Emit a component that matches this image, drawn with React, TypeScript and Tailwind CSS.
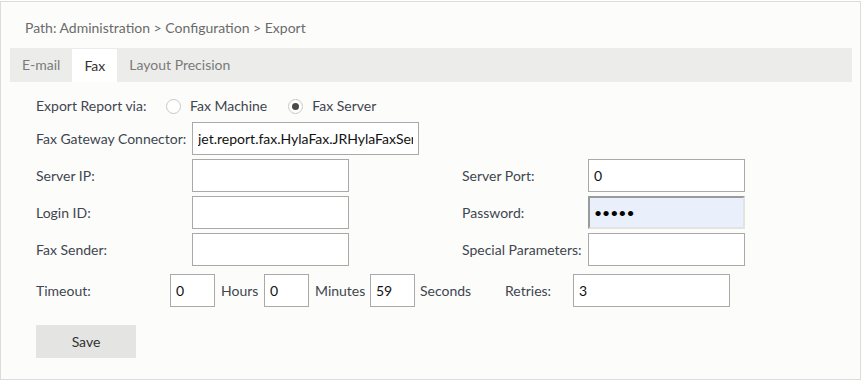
import type { ReactNode } from 'react';

const inputBase =
  'block h-[33px] border border-[#a9a9a9] bg-white px-[5px] text-[14px] text-[#111] outline-none';

function Field({ value = '', width = 'w-[157px]' }: { value?: string; width?: string }) {
  return <input readOnly value={value} className={`${inputBase} ${width}`} />;
}

function Row({ label, children }: { label: string; children: ReactNode }) {
  return (
    <div className="flex items-center">
      <span className="w-[156px] shrink-0">{label}</span>
      {children}
    </div>
  );
}

function Radio({ checked, label }: { checked?: boolean; label: string }) {
  return (
    <label className="flex items-center">
      <span className="flex h-[15px] w-[15px] items-center justify-center rounded-full border border-[#c8c8c8] bg-white">
        {checked && <span className="h-[7px] w-[7px] rounded-full bg-[#4a4a4a]" />}
      </span>
      <span className="ml-[9px]">{label}</span>
    </label>
  );
}

export default function App() {
  return (
    <div className="pt-px" style={{ fontFamily: 'Lato, "Open Sans", sans-serif' }}>
      <div className="h-[379px] w-[861px] border border-[#dcdcdc] bg-[#fcfdfb] text-[14px] leading-[20px] text-[#3f4550]">
        {/* Breadcrumb */}
        <div className="px-[24px] pt-[16px] text-[#6b6b6b]">
          Path: Administration &gt; Configuration &gt; Export
        </div>

        {/* Tabs */}
        <div className="ml-[9px] mr-[8px] mt-[10px] flex h-[34px] bg-[#ecedea] text-[#7a7a7a]">
          <div className="flex items-center px-[12px]">E-mail</div>
          <div className="mt-px flex items-center bg-white px-[12px] text-[#333]">Fax</div>
          <div className="flex items-center px-[12px]">Layout Precision</div>
        </div>

        {/* Form */}
        <div className="pl-[35px]">
          <div className="mt-[14px] flex h-[20px] items-center">
            <span className="w-[130px] shrink-0">Export Report via:</span>
            <Radio label="Fax Machine" />
            <span className="w-[21px]" />
            <Radio checked label="Fax Server" />
          </div>

          <div className="mt-[6px] flex flex-col gap-[4px]">
            <Row label="Fax Gateway Connector:">
              <Field value="jet.report.fax.HylaFax.JRHylaFaxServer" width="w-[227px]" />
            </Row>
            <div className="flex">
              <div className="flex flex-col gap-[4px]">
                <Row label="Server IP:">
                  <Field />
                </Row>
                <Row label="Login ID:">
                  <Field />
                </Row>
                <Row label="Fax Sender:">
                  <Field />
                </Row>
              </div>
              <div className="ml-[113px] flex flex-col gap-[4px]">
                <div className="flex items-center">
                  <span className="w-[126px] shrink-0">Server Port:</span>
                  <Field value="0" />
                </div>
                <div className="flex items-center">
                  <span className="w-[126px] shrink-0">Password:</span>
                  <input
                    readOnly
                    type="password"
                    value="abcde"
                    className="block h-[33px] w-[157px] border-2 border-b-[#e3e3e3] border-l-[#9a9a9a] border-r-[#e3e3e3] border-t-[#9a9a9a] bg-[#e9f0fb] px-[4px] text-[14px] text-black outline-none"
                  />
                </div>
                <div className="flex items-center">
                  <span className="w-[126px] shrink-0">Special Parameters:</span>
                  <Field />
                </div>
              </div>
            </div>
          </div>

          {/* Timeout */}
          <div className="mt-[8px] flex items-center">
            <span className="w-[134px] shrink-0">Timeout:</span>
            <Field value="0" width="w-[45px]" />
            <span className="ml-[6px] w-[43px]">Hours</span>
            <Field value="0" width="w-[45px]" />
            <span className="ml-[6px] w-[55px]">Minutes</span>
            <Field value="59" width="w-[45px]" />
            <span className="ml-[5px] w-[85px]">Seconds</span>
            <span className="w-[68px]">Retries:</span>
            <Field value="3" width="w-[157px]" />
          </div>

          <button className="mt-[18px] block h-[33px] w-[100px] bg-[#e4e4e2] text-[14px] text-[#333]">
            Save
          </button>
        </div>
      </div>
    </div>
  );
}
